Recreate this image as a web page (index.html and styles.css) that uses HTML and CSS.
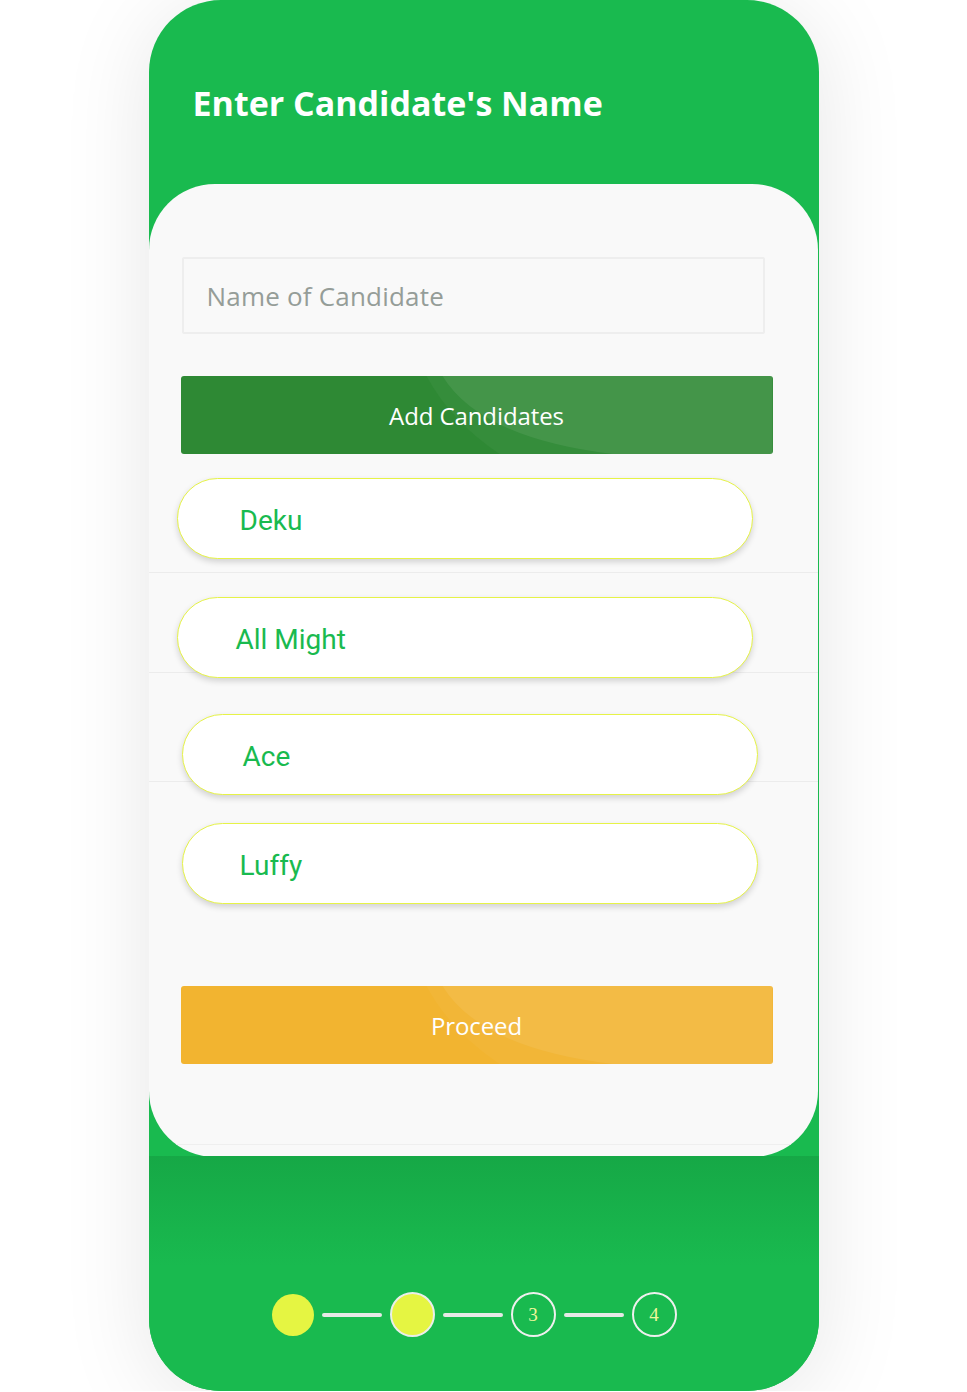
FILE: index.html
```html
<!DOCTYPE html>
<html>
<head>
<meta charset="utf-8">
<link rel="stylesheet" href="styles.css">
</head>
<body>
<div class="phone">
  <div class="header">
    <h1 class="title">Enter Candidate's Name</h1>
  </div>
  <div class="panel">
    <div class="field">Name of Candidate</div>
    <div class="btn btn-green"><span class="btn-label">Add Candidates</span></div>
    <div class="list">
      <div class="item item-1"><div class="pill pill-a"><span class="name n1">Deku</span></div></div>
      <div class="item item-2"><div class="pill pill-a"><span class="name n2">All Might</span></div></div>
      <div class="item item-3"><div class="pill pill-b"><span class="name n3">Ace</span></div></div>
      <div class="item item-4"><div class="pill pill-b"><span class="name n4">Luffy</span></div></div>
    </div>
    <div class="btn btn-orange"><span class="btn-label">Proceed</span></div>
    <div class="panel-foot"></div>
  </div>
  <div class="footer">
    <div class="stepper">
      <div class="step step-done"></div>
      <div class="bar"></div>
      <div class="step step-current"></div>
      <div class="bar"></div>
      <div class="step step-todo">3</div>
      <div class="bar"></div>
      <div class="step step-todo">4</div>
    </div>
  </div>
</div>
</body>
</html>
```

FILE: styles.css
```css
html, body {
  margin: 0;
  padding: 0;
  background: #ffffff;
}

.phone {
  width: 670px;
  height: 1391px;
  margin: 0 auto;
  background: #19ba4f;
  border-radius: 72px;
  box-shadow: 0 10px 90px rgba(0, 0, 0, 0.10);
  display: flex;
  flex-direction: column;
  overflow: hidden;
}

.header {
  height: 184px;
  box-sizing: border-box;
  padding: 80px 0 0 44px;
}

.title {
  margin: 0;
  font-family: "Open Sans", "Noto Sans", sans-serif;
  font-weight: 700;
  font-size: 34px;
  line-height: 46px;
  letter-spacing: 0;
  color: #ffffff;
}

.panel {
  width: 669px;
  height: 973px;
  box-sizing: border-box;
  background: #f9f9f9;
  border-radius: 66px;
  padding-top: 73px;
  display: flex;
  flex-direction: column;
  overflow: hidden;
  flex: none;
}

.field {
  margin-left: 33px;
  width: 583px;
  height: 77px;
  box-sizing: border-box;
  border: 2px solid #eeeeee;
  border-radius: 2px;
  padding-left: 23px;
  font-family: "Open Sans", "Noto Sans", sans-serif;
  font-size: 26px;
  letter-spacing: 0.2px;
  color: #959d98;
  display: flex;
  align-items: center;
}

.btn {
  position: relative;
  margin-left: 32px;
  width: 592px;
  height: 78px;
  border-radius: 3px;
  overflow: hidden;
  display: flex;
  align-items: center;
  justify-content: center;
  flex: none;
}

.btn::before {
  content: "";
  position: absolute;
  inset: 0;
  background: rgba(255, 255, 255, 0.035);
  clip-path: path("M246 0 Q270 45 319 78 L592 78 L592 0 Z");
}

.btn::after {
  content: "";
  position: absolute;
  inset: 0;
  background: rgba(255, 255, 255, 0.075);
  clip-path: path("M262 0 Q300 62 432 78 L592 78 L592 0 Z");
}

.btn-label {
  position: relative;
  z-index: 1;
  font-family: "Open Sans", "Noto Sans", sans-serif;
  font-size: 24px;
  letter-spacing: -0.1px;
  color: #ffffff;
}

.btn-green {
  margin-top: 42px;
  background: #2e8934;
}

.btn-orange {
  margin-top: 82px;
  background: #f2b430;
}

.list {
  display: flex;
  flex-direction: column;
}

.item {
  box-sizing: border-box;
  border-bottom: 1px solid #ececec;
}

.item-1 { padding-top: 24px; height: 119px; }
.item-2 { padding-top: 24px; height: 100px; }
.item-3 { padding-top: 41px; height: 109px; }
.item-4 { padding-top: 41px; border-bottom: none; }

.pill {
  position: relative;
  z-index: 1;
  width: 576px;
  height: 81px;
  box-sizing: border-box;
  background: #ffffff;
  border: 1.5px solid #e6f347;
  border-radius: 41px;
  box-shadow: 0 3px 6px rgba(0, 0, 0, 0.16);
  display: flex;
  align-items: center;
  padding-top: 3px;
}

.pill-a { margin-left: 28px; }
.pill-b { margin-left: 33px; }

.name {
  font-family: Roboto, "Noto Sans", sans-serif;
  font-size: 28px;
  color: #19ba4f;
}

.n1 { padding-left: 62px; }
.n2 { padding-left: 58px; }
.n3 { padding-left: 60px; }
.n4 { padding-left: 57px; }

.panel-foot {
  height: 80px;
  border-bottom: 1px solid #efefef;
  flex: none;
}

.footer {
  flex: 1;
  background: linear-gradient(to bottom, #16a846 0px, #19ba4f 110px, #19ba4f 100%);
  margin-top: -1px;
  padding-top: 136px;
  box-sizing: border-box;
}

.stepper {
  display: flex;
  align-items: center;
  justify-content: center;
  gap: 8px;
  padding-right: 19px;
}

.step {
  box-sizing: border-box;
  border-radius: 50%;
  display: flex;
  align-items: center;
  justify-content: center;
  font-family: "Liberation Serif", serif;
  font-size: 19px;
  color: #f1f79c;
}

.step-done {
  width: 42px;
  height: 42px;
  background: #e5f542;
}

.step-current {
  width: 45px;
  height: 45px;
  background: #e5f542;
  border: 2px solid #eaeeea;
}

.step-todo {
  width: 45px;
  height: 45px;
  border: 2px solid #eef0ee;
}

.bar {
  width: 60px;
  height: 4px;
  border-radius: 2px;
  background: #e6e9e6;
}
```
